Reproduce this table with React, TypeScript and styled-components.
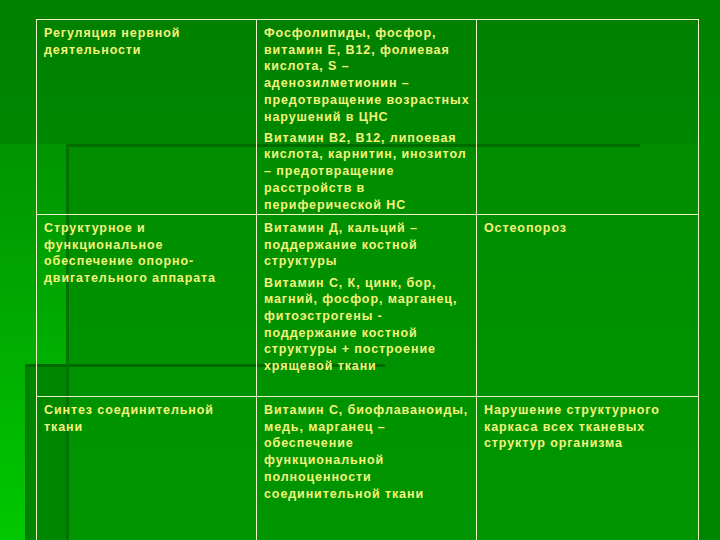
import styled, { createGlobalStyle } from "styled-components"

const GlobalStyle = createGlobalStyle`
  html, body {
    margin: 0;
    padding: 0;
    background: #008600;
  }
`

// Slide with the template's stripes drawn as background layers
const Slide = styled.div`
  width: 720px;
  height: 540px;
  overflow: hidden;
  box-sizing: border-box;
  padding: 19px 23px 0 36px;
  background-color: #008700;
  background-image:
    linear-gradient(#006c00, #006c00),
    linear-gradient(#007200, #007200),
    linear-gradient(#006a00, #006a00),
    linear-gradient(#007c00, #007c00),
    linear-gradient(to bottom, #00b000, #00c800),
    linear-gradient(to bottom, #009400, #00b000),
    linear-gradient(to bottom, #008d00, #009600),
    linear-gradient(to bottom, #008000, #008800);
  background-size:
    572px 3px,
    3px 396px,
    360px 3px,
    4px 176px,
    25px 176px,
    68px 221px,
    630px 396px,
    720px 144px;
  background-position:
    68px 144px,
    66px 144px,
    25px 364px,
    25px 365px,
    0 365px,
    0 144px,
    68px 144px,
    0 0;
  background-repeat: no-repeat;
`

const Table = styled.table`
  width: 662px;
  border-collapse: collapse;
  table-layout: fixed;
  font-family: "Liberation Sans", Arial, sans-serif;
  font-weight: bold;
  font-size: 12.5px;
  letter-spacing: 0.9px;
  color: #f4f47c;
`

const Col = styled.col<{ $w: number }>`
  width: ${p => p.$w}px;
`

const Row = styled.tr<{ $h: number }>`
  height: ${p => p.$h}px;
`

const Cell = styled.td`
  border: 1px solid #eef2cc;
  vertical-align: top;
  padding: 5px 5px 0 7px;
  line-height: 16.7px;
`

const Para = styled.p`
  margin: 0;

  & + & {
    margin-top: 4.5px;
  }
`

export default function App() {
  return (
    <Slide>
      <GlobalStyle />
      <Table>
        <colgroup>
          <Col $w={220} />
          <Col $w={220} />
          <Col $w={222} />
        </colgroup>
        <tbody>
          <Row $h={195}>
            <Cell>
              <Para>Регуляция нервной деятельности</Para>
            </Cell>
            <Cell>
              <Para>
                Фосфолипиды, фосфор, витамин Е, В12, фолиевая кислота, S –
                аденозилметионин – предотвращение возрастных нарушений в ЦНС
              </Para>
              <Para>
                Витамин В2, В12, липоевая кислота, карнитин, инозитол –
                предотвращение расстройств в периферической НС
              </Para>
            </Cell>
            <Cell />
          </Row>
          <Row $h={182}>
            <Cell>
              <Para>
                Структурное и функциональное обеспечение опорно-двигательного
                аппарата
              </Para>
            </Cell>
            <Cell>
              <Para>Витамин Д, кальций – поддержание костной структуры</Para>
              <Para>
                Витамин С, К, цинк, бор, магний, фосфор, марганец,
                фитоэстрогены - поддержание костной структуры + построение
                хрящевой ткани
              </Para>
            </Cell>
            <Cell>
              <Para>Остеопороз</Para>
            </Cell>
          </Row>
          <Row $h={170}>
            <Cell>
              <Para>Синтез соединительной ткани</Para>
            </Cell>
            <Cell>
              <Para>
                Витамин С, биофлаваноиды, медь, марганец – обеспечение
                функциональной полноценности соединительной ткани
              </Para>
            </Cell>
            <Cell>
              <Para>Нарушение структурного каркаса всех тканевых структур организма</Para>
            </Cell>
          </Row>
        </tbody>
      </Table>
    </Slide>
  )
}
